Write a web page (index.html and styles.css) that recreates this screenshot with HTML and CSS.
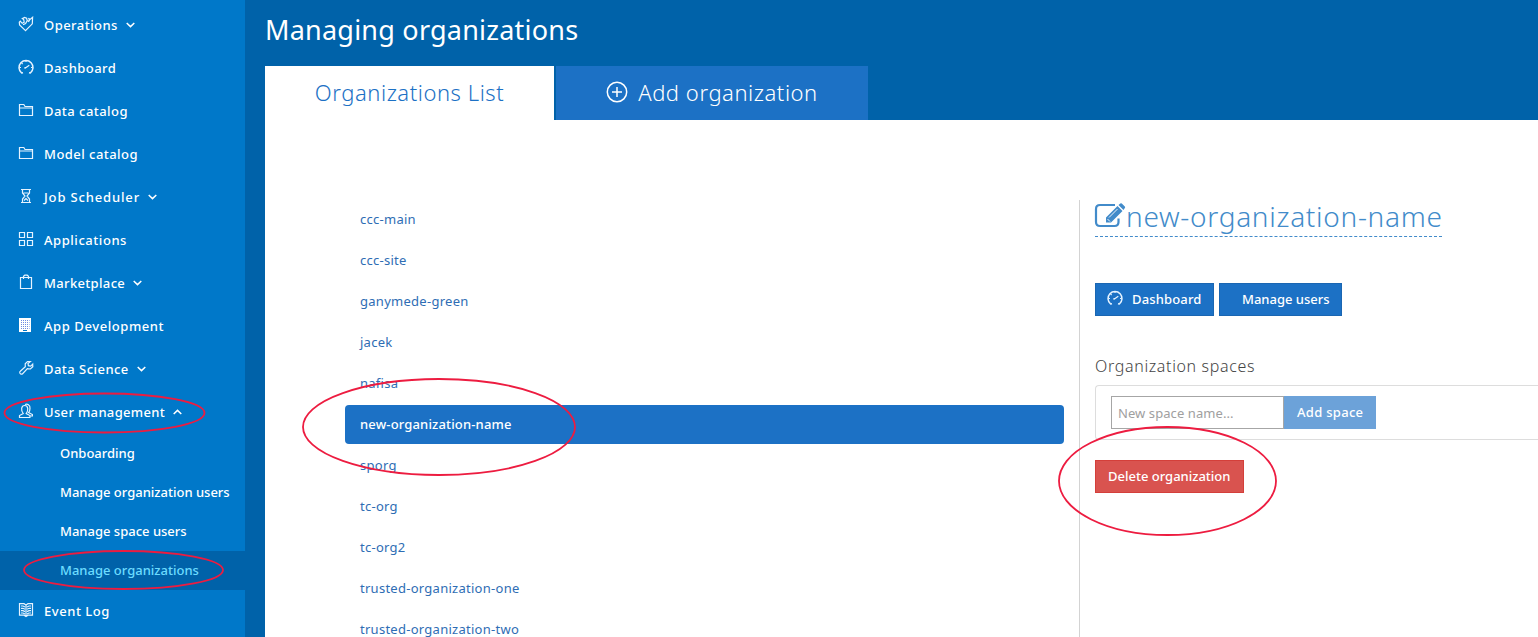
FILE: index.html
```html
<!DOCTYPE html>
<html lang="en">
<head>
<meta charset="utf-8">
<title>Managing organizations</title>
<link rel="stylesheet" href="styles.css">
</head>
<body>
<div class="app">
  <nav class="sidebar">
    <a class="item"><svg class="icon" viewBox="0 0 16 16"><path d="M7.500 14.600 1.600 9 1.300 6.300 2.300 5.200 4.200 7.300 6.200 6.200 5.700 3.600 4.300 2.600 6.500 1.400 8.600 2.300 9.200 4.600 10.700 5.400 11.600 4 10.500 2.200 12 3.500 14.600 1.300 14.300 7.800Z"/><path d="M5 8.800 7.600 7.600 9 5"/></svg><span class="label">Operations</span><svg class="caret" viewBox="0 0 9 6"><path d="M.7 1 4.500 4.600 8.300 1"/></svg></a>
    <a class="item"><svg class="icon" viewBox="0 0 16 16"><path class="bold" d="M5 13.700 3.600 14A7 7 0 1 1 12.400 14L11 13.700"/><path d="M7 9.200l4.300-2.900M7 8v1.800M1.500 8.500H3M8 1.500V3M13 8.500h1.500M3.600 4l1 1"/></svg><span class="label">Dashboard</span></a>
    <a class="item"><svg class="icon" viewBox="0 0 16 16"><path d="M1.500 13.500V2.500h4.300l1.200 2h7.500v9ZM1.500 6h13"/></svg><span class="label">Data catalog</span></a>
    <a class="item"><svg class="icon" viewBox="0 0 16 16"><path d="M1.500 13.500V2.500h4.300l1.200 2h7.500v9ZM1.500 6h13"/></svg><span class="label">Model catalog</span></a>
    <a class="item"><svg class="icon" viewBox="0 0 16 16"><path d="M3 1.500h10M3 14.500h10M4.500 1.500V5L7 8l-2.500 3v3.500M11.500 1.500V5L9 8l2.500 3v3.500M5.500 5h5M6 12.500 8 10.500l2 2"/></svg><span class="label wide">Job Scheduler</span><svg class="caret" viewBox="0 0 9 6"><path d="M.7 1 4.500 4.600 8.300 1"/></svg></a>
    <a class="item"><svg class="icon" viewBox="0 0 16 16"><path d="M1.500 1.500h5v5h-5ZM9.500 1.500h5v5h-5ZM1.500 9.500h5v5h-5ZM9.500 9.500h5v5h-5Z"/></svg><span class="label apps">Applications</span></a>
    <a class="item"><svg class="icon" viewBox="0 0 16 16"><path d="M2.500 3.500h11v11h-11ZM5.500 5V2.300L6.800 1.200h2.400l1.300 1.100V5"/></svg><span class="label tight">Marketplace</span><svg class="caret" viewBox="0 0 9 6"><path d="M.7 1 4.500 4.600 8.300 1"/></svg></a>
    <a class="item"><svg class="icon" viewBox="0 0 16 16"><path class="solid" d="M1 1h12v14H9v-2H5v2H1Z"/><path class="windows" d="M3 3.500h8.500M3 5.500h8.500M3 7.500h8.500M3 9.500h8.500M3 11.500h8.500"/><path class="solid" d="M4.500 14h5v1h-5Z"/></svg><span class="label mid">App Development</span></a>
    <a class="item"><svg class="icon" viewBox="0 0 16 16"><path d="m12.300 1.500-2.300 2 .4 2.200 2.300.4 2-2 .1 2.700-2.400 2.200-3-.3-5 5.300q-1.500.8-2.600-1-.3-1.100.5-1.700l5-4.600-.1-3L9.500 1.500Z"/></svg><span class="label">Data Science</span><svg class="caret" viewBox="0 0 9 6"><path d="M.7 1 4.500 4.600 8.300 1"/></svg></a>
    <a class="item"><svg class="icon" viewBox="0 0 16 16"><path d="M1.500 14.500v-2l3.700-2C2.800 7.500 3 2.500 6.700 2.500s3.900 5 1.500 8l3.700 2v2ZM7 1.500c2-.8 5.500 0 5 4 0 1.500-.5 3-1.400 4l3.800 2v1.500h-2"/></svg><span class="label tight">User management</span><svg class="caret" viewBox="0 0 9 6"><path d="M.7 5 4.500 1.400 8.300 5"/></svg></a>
    <a class="sub"><span>Onboarding</span></a>
    <a class="sub"><span>Manage organization users</span></a>
    <a class="sub"><span>Manage space users</span></a>
    <a class="sub current"><span>Manage organizations</span></a>
    <a class="item"><svg class="icon" viewBox="0 0 16 16"><path d="M8 3 6 1.700H1.500v11.500H6l2 1.300 2-1.300h4.500V1.700H10ZM8 3v11.500M3 4h2l2 1M3 6.300h2l2 1M3 8.600h2l2 1M3 11h2l2 1M13 4h-2L9 5M13 6.300h-2l-2 1M13 8.600h-2l-2 1M13 11h-2l-2 1"/></svg><span class="label apps">Event Log</span></a>
  </nav>
  <main class="main">
    <h1 class="title"><span>Managing organizations</span></h1>
    <div class="tabs">
      <a class="tab active"><span>Organizations List</span></a>
      <a class="tab add"><svg class="plus" viewBox="0 0 22 22"><circle cx="11" cy="11" r="9.700"/><path d="M11 6v10M6 11h10"/></svg><span>Add organization</span></a>
    </div>
    <div class="content">
      <ul class="orgs">
        <li>ccc-main</li>
        <li>ccc-site</li>
        <li>ganymede-green</li>
        <li>jacek</li>
        <li>nafisa</li>
        <li class="selected">new-organization-name</li>
        <li>sporg</li>
        <li>tc-org</li>
        <li>tc-org2</li>
        <li>trusted-organization-one</li>
        <li>trusted-organization-two</li>
      </ul>
      <section class="detail">
        <h2 class="name"><svg class="edit" viewBox="0 0 31 26"><path class="frame" d="M20 2H5Q1 2 1 6v13q0 4 4 4h14.500q4 0 4-4v-3.500"/><path class="pencil" d="M11 19.500v-5L22.500 3l5 5L16 19.500ZM23.500 2l1.800-1.500q.8-.6 1.500 0l3 3q.8.800 0 1.600L28.500 7Z"/><path class="detail-line" d="m14 14.500 8.500-8.500M12.500 16l2.500 2.500"/></svg><span>new-organization-name</span></h2>
        <div class="actions">
          <button class="btn dash"><svg class="icon" viewBox="0 0 16 16"><path class="bold" d="M5 13.700 3.600 14A7 7 0 1 1 12.400 14L11 13.700"/><path d="M7 9.200l4.300-2.900M7 8v1.800M1.500 8.500H3M8 1.500V3M13 8.500h1.500M3.600 4l1 1"/></svg><span>Dashboard</span></button>
          <button class="btn users"><span>Manage users</span></button>
        </div>
        <h3 class="spaces-title"><span>Organization spaces</span></h3>
        <div class="spaces">
          <input class="space-name" type="text" placeholder="New space name...">
          <button class="btn add-space"><span>Add space</span></button>
        </div>
        <button class="btn delete"><span>Delete organization</span></button>
      </section>
    </div>
  </main>
  <svg class="marks" viewBox="0 0 1538 637">
    <ellipse cx="104.500" cy="413" rx="100" ry="19.500"/>
    <ellipse cx="123.500" cy="570" rx="99.500" ry="19"/>
    <ellipse cx="439" cy="427" rx="136" ry="48"/>
    <ellipse cx="1167.500" cy="481" rx="108.500" ry="54"/>
  </svg>
</div>
</body>
</html>
```
FILE: styles.css
```css
* { box-sizing: border-box; }
body {
  margin: 0;
  overflow: hidden;
  font-family: "Noto Sans", "Open Sans", sans-serif;
  font-size: 13px;
}
.app {
  position: relative;
  display: flex;
  width: 1538px;
  height: 637px;
  overflow: hidden;
  background: #0062a9;
}
.sidebar {
  flex: 0 0 245px;
  display: flex;
  flex-direction: column;
  padding-top: 4px;
  background: #0078c9;
  color: #fff;
  font-size: 13px;
  font-weight: 500;
}
.item {
  flex: 0 0 43px;
  display: flex;
  align-items: center;
  padding: 0 0 2px 18px;
}
.label { letter-spacing: .46px; }
.label.tight { letter-spacing: .34px; }
.label.apps { letter-spacing: .55px; }
.label.mid { letter-spacing: .58px; }
.label.wide { letter-spacing: .85px; }
.icon {
  width: 16px;
  height: 16px;
  margin: -1px 10px 0 0;
  flex: none;
  fill: none;
  stroke: #e6f3ff;
  stroke-width: 1.200;
}
.icon .bold { stroke-width: 1.500; }
.icon .solid { fill: #fff; stroke: none; }
.icon .windows { stroke: #6d8be0; stroke-dasharray: 1 1; }
.caret {
  width: 9px;
  height: 6px;
  margin: 1px 0 0 8px;
  fill: none;
  stroke: #fff;
  stroke-width: 1.500;
}
.sub {
  flex: 0 0 39px;
  display: flex;
  align-items: center;
  padding: 0 0 2px 60px;
}
.current { background: #0062a9; color: #6cdcff; }
.main { flex: 1; padding-left: 20px; }
.title {
  margin: 0;
  height: 66px;
  line-height: 59px;
  color: #fff;
  font-size: 27px;
  font-weight: 400;
  letter-spacing: .22px;
}
.tabs {
  display: flex;
  gap: 2px;
  height: 54px;
  font-size: 22px;
  font-weight: 300;
  letter-spacing: .55px;
}
.tab {
  display: flex;
  align-items: center;
  justify-content: center;
  padding-bottom: 2px;
}
.active { width: 289px; background: #fff; color: #1c71c5; }
.add { width: 312px; background: #1c71c5; color: #fff; gap: 10px; }
.plus {
  width: 22px;
  height: 22px;
  fill: none;
  stroke: #fff;
  stroke-width: 1.500;
}
.content {
  display: flex;
  height: 517px;
  padding: 80px 0 0 80px;
  background: #fff;
}
.orgs {
  width: 719px;
  margin: 0 15px 0 0;
  padding: 0;
  list-style: none;
  color: #2e6db4;
  letter-spacing: .27px;
}
.orgs li {
  height: 39px;
  margin-bottom: 2px;
  padding-left: 15px;
  line-height: 38px;
}
.orgs .selected {
  border-radius: 4px;
  background: #1c71c5;
  color: #fff;
  font-weight: 500;
  letter-spacing: .16px;
}
.detail {
  flex: 1;
  padding-left: 15px;
  border-left: 1px solid #d3d3d3;
}
.name {
  display: flex;
  width: 347px;
  height: 37px;
  margin: 0;
  border-bottom: 1px dashed #428bca;
  color: #428bca;
  font-size: 28px;
  font-weight: 300;
  letter-spacing: .7px;
  line-height: 33px;
  white-space: nowrap;
}
.edit { width: 31px; height: 26px; margin-top: 3px; flex: none; overflow: visible; }
.edit .frame { fill: none; stroke: #428bca; stroke-width: 2.200; }
.edit .pencil { fill: #428bca; }
.edit .detail-line { fill: none; stroke: #fff; stroke-width: .9; }
.actions { display: flex; gap: 5px; margin-top: 46px; }
.btn {
  display: flex;
  align-items: center;
  height: 33px;
  padding: 0 12px 1px;
  border: 1px solid #1a66b2;
  background: #1c71c5;
  color: #fff;
  font: 500 13px "Noto Sans", sans-serif;
  white-space: nowrap;
}
.btn .icon { margin: -2px 9px 0 -1px; }
.dash { width: 119px; letter-spacing: .15px; }
.users { width: 123px; padding-left: 22px; }
.spaces-title {
  margin: 39px 0 0;
  height: 30px;
  color: #444;
  font-size: 16px;
  font-weight: 300;
  letter-spacing: .65px;
  line-height: 22px;
}
.spaces {
  display: flex;
  height: 55px;
  padding: 10px 15px;
  border: 1px solid #ddd;
  border-right: 0;
  border-radius: 4px 0 0 4px;
}
.space-name {
  width: 173px;
  height: 33px;
  padding: 0 6px;
  border: 1px solid #a6a6a6;
  font: 400 13px "Noto Sans", sans-serif;
  letter-spacing: .08px;
}
.space-name::placeholder { color: #a0a0a0; }
.add-space {
  width: 92px;
  border-color: #6ca2d9;
  background: #6ca2d9;
  letter-spacing: .3px;
}
.delete {
  width: 149px;
  margin-top: 20px;
  border-color: #d43f3a;
  background: #d9534f;
}
.marks {
  position: absolute;
  inset: 0;
  width: 1538px;
  height: 637px;
  fill: none;
  stroke: #ed1c40;
  stroke-width: 1.800;
  pointer-events: none;
}
```
